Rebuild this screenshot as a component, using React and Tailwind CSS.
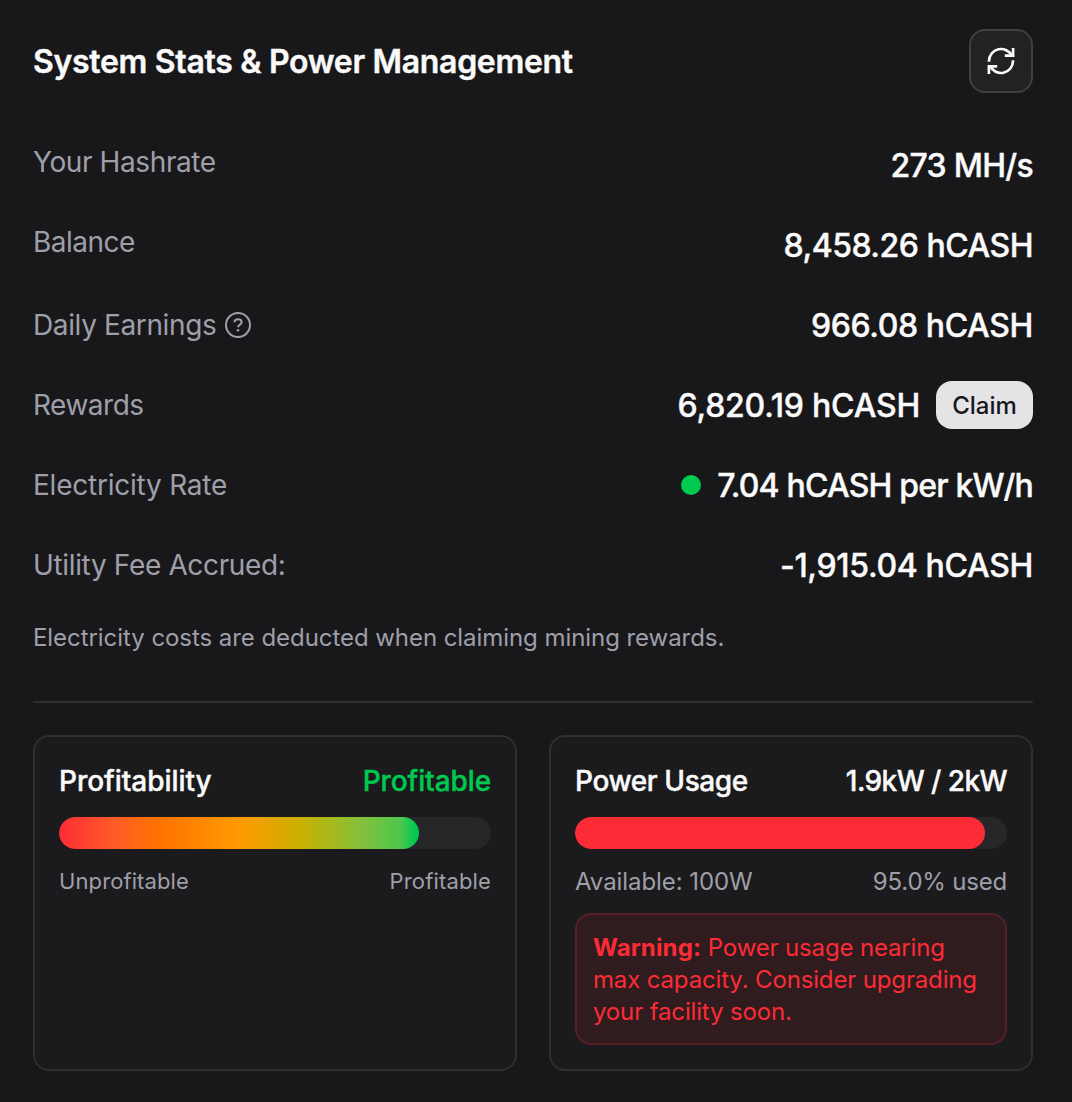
function RefreshIcon() {
  return (
    <svg width="32" height="32" viewBox="0 0 32 32" fill="none" stroke="currentColor" strokeWidth="2.7" aria-hidden="true">
      <path d="M4 16.7V16a12 12 0 0 1 22.9-5" />
      <path d="M28.1 3v7.7h-8.3" />
      <path d="M28 15.3V16a12 12 0 0 1-22.9 5" />
      <path d="M3.9 29v-7.7h8.3" />
    </svg>
  );
}

function HelpIcon() {
  return (
    <svg className="ml-2" width="28" height="28" viewBox="0 0 28 28" fill="none" stroke="currentColor" strokeWidth="2" aria-hidden="true">
      <circle cx="14" cy="14" r="12" />
      <path d="M10.4 11.3C10.5 9.3 12 8.3 14.1 8.3s3.5 1.2 3.5 2.9c0 2.5-3.5 2.4-3.5 5.1" />
      <circle cx="14" cy="19.2" r="1.3" fill="currentColor" stroke="none" />
    </svg>
  );
}

function Row({ label, labelClass = '', valueClass = '', before, after, children }) {
  return (
    <div className="flex h-20 items-center justify-between">
      <span className={`flex items-center text-[28px] leading-10 text-[#9f9fa9] ${labelClass}`}>{label}</span>
      <span className="flex items-center">
        {before}
        <span className={`pt-0.5 text-[32px] leading-10 font-medium [-webkit-text-stroke:0.4px] ${valueClass}`}>{children}</span>
        {after}
      </span>
    </div>
  );
}

function Bar({ width, fill }) {
  return (
    <div className="mt-4 h-8 overflow-hidden rounded-full bg-[#27272a]">
      <div className={`h-full rounded-full ${fill}`} style={{ width }} />
    </div>
  );
}

export default function App() {
  return (
    <main className="flex h-[1102px] w-[1072px] flex-col bg-[#18181b] pt-[29px] pr-[39px] pl-[33px] font-['Inter',sans-serif] text-[#fafafa]">
      <header className="flex h-16 items-center justify-between">
        <h1 className="pt-0.5 text-[32px] leading-10 font-semibold tracking-[-0.31px] [-webkit-text-stroke:0.4px]">System Stats &amp; Power Management</h1>
        <button className="flex size-16 items-center justify-center rounded-2xl border-2 border-[#3f3f42] bg-[#222225]" aria-label="Refresh">
          <RefreshIcon />
        </button>
      </header>
      <section className="mt-8">
        <Row label="Your Hashrate" labelClass="mb-[7px] tracking-[-0.4px]" valueClass="tracking-[-0.7px]">273 MH/s</Row>
        <Row label="Balance" labelClass="mb-[7px] tracking-[-0.5px]" valueClass="tracking-[-0.5px]">8,458.26 hCASH</Row>
        <Row label={<>Daily Earnings<HelpIcon /></>} labelClass="tracking-[-0.37px]" valueClass="tracking-[-0.38px]">966.08 hCASH</Row>
        <Row
          label="Rewards"
          labelClass="tracking-[-0.5px]"
          valueClass="tracking-[-0.23px]"
          after={<button className="ml-4 h-12 w-[97px] rounded-2xl bg-[#e4e4e7] pt-0.5 text-2xl font-medium text-[#18181b]">Claim</button>}
        >
          6,820.19 hCASH
        </Row>
        <Row label="Electricity Rate" labelClass="tracking-[-0.23px]" valueClass="tracking-[-0.81px]" before={<i className="mr-4 size-5 rounded-full bg-[#00c950]" />}>
          7.04 hCASH per kW/h
        </Row>
        <Row label="Utility Fee Accrued:" labelClass="tracking-[-0.35px]" valueClass="tracking-[-0.33px]">-1,915.04 hCASH</Row>
      </section>
      <p className="mt-4 pt-px text-2xl leading-8 tracking-[-0.06px] text-[#9f9fa9]">Electricity costs are deducted when claiming mining rewards.</p>
      <div className="mt-[47px] h-0.5 bg-[#2f2f32]" />
      <section className="mt-8 grid h-[336px] grid-cols-2 gap-8">
        <article className="rounded-2xl border-2 border-[#2f2f32] bg-[#1b1b1d] p-6">
          <div className="flex justify-between text-[28px] leading-10 font-medium [-webkit-text-stroke:0.4px]">
            <h2 className="tracking-[-0.05px]">Profitability</h2>
            <span className="tracking-[-0.1px] text-[#00c950]">Profitable</span>
          </div>
          <Bar width="360px" fill="bg-[linear-gradient(to_right,#fb2c36_0%,#ff5a28_15%,#ff7400_28%,#ff9a00_50%,#cbb000_67%,#83c13c_84%,#4cc74c_95%,#00c950_99%)]" />
          <div className="mt-4 flex justify-between text-[22px] leading-8 text-[#9f9fa9]">
            <span className="tracking-[0.1px]">Unprofitable</span>
            <span className="tracking-[0.15px]">Profitable</span>
          </div>
        </article>
        <article className="rounded-2xl border-2 border-[#2f2f32] bg-[#1b1b1d] p-6">
          <div className="flex justify-between text-[28px] leading-10 font-medium [-webkit-text-stroke:0.4px]">
            <h2 className="tracking-[-0.4px]">Power Usage</h2>
            <span className="tracking-[-0.58px]">1.9kW / 2kW</span>
          </div>
          <Bar width="95%" fill="bg-[#fb2c36]" />
          <div className="mt-4 flex justify-between pt-px text-2xl leading-[31px] text-[#9f9fa9]">
            <span className="tracking-[-0.07px]">Available: 100W</span>
            <span className="tracking-[-0.2px]">95.0% used</span>
          </div>
          <p className="mt-4 rounded-2xl border-2 border-[#562027] bg-[#301b1e] px-4 pt-[17px] pb-[15px] text-2xl tracking-[-0.15px] text-[#fb2c36]">
            <b className="tracking-[0.15px]">Warning:</b> Power usage nearing<br />max capacity. Consider upgrading<br />your facility soon.
          </p>
        </article>
      </section>
    </main>
  );
}
